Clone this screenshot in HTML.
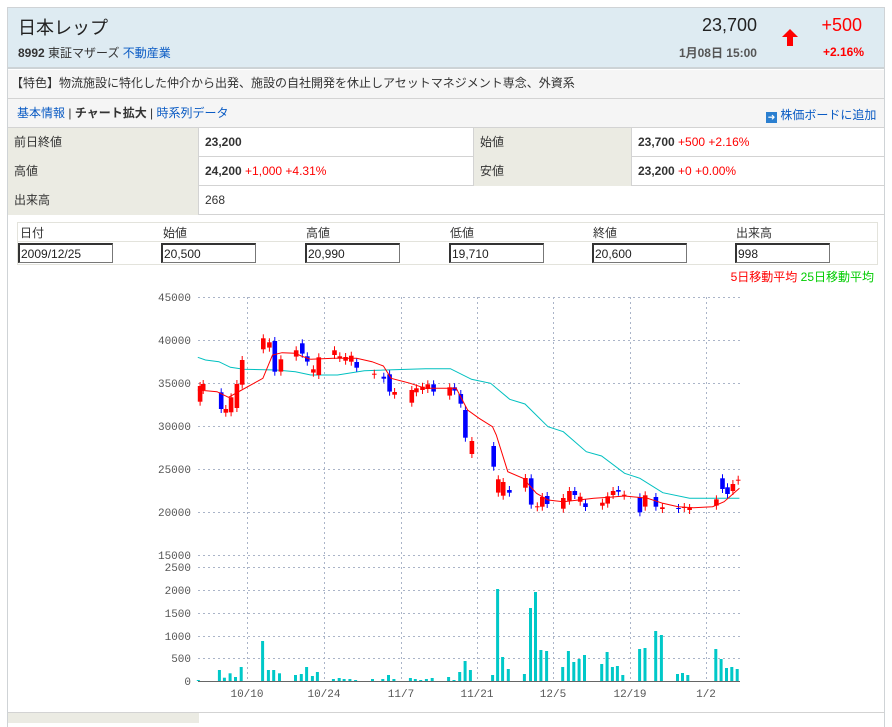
<!DOCTYPE html>
<html><head><meta charset="utf-8"><style>
*{margin:0;padding:0;box-sizing:border-box}
body{width:892px;height:720px;background:#fff;font-family:"Liberation Sans","Noto Sans CJK JP",sans-serif;font-size:12px;color:#333;position:relative;overflow:hidden}
.a{position:absolute}
.box{left:7px;top:7px;width:878px;height:720px;border:1px solid #cfd3d6;border-bottom:none}
.hdr{left:8px;top:8px;width:876px;height:61px;background:#deebf2;border-bottom:2px solid #cdd3d6}
.red{color:#f00}
.blue{color:#0a5bc4}
.row{left:8px;width:876px;border-bottom:1px solid #d3d3d3}
.lab{background:#ebebe3}
.cell{position:absolute;top:0;height:29px;line-height:29px;padding-left:6px;font-size:12px;border-right:1px solid #d3d3d3}
input{position:absolute;height:20px;width:95px;border:1px solid #777;border-top:2px solid #333;border-left:2px solid #333;font:12px "Liberation Sans","Noto Sans CJK JP",sans-serif;padding-left:1px;color:#222;background:#fff}
</style></head><body>
<div class="a box"></div>
<div class="a hdr"></div>
<div class="a" style="left:18px;top:14px;font-size:18px;color:#222">日本レップ</div>
<div class="a" style="left:18px;top:44px;font-size:12px;color:#333"><b>8992</b> 東証マザーズ <span class="blue">不動産業</span></div>
<div class="a" style="left:690px;top:15px;width:67px;text-align:right;font-size:18px;color:#222">23,700</div>
<div class="a" style="left:640px;top:44px;width:117px;text-align:right;font-size:12px;color:#555;font-weight:bold">1月08日 15:00</div>
<svg class="a" style="left:780px;top:28px" width="20" height="20"><path d="M10 1 L18 9 L13 9 L13 18 L7 18 L7 9 L2 9 Z" fill="#f00"/></svg>
<div class="a red" style="left:800px;top:15px;width:62px;text-align:right;font-size:18px">+500</div>
<div class="a red" style="left:800px;top:45px;width:64px;text-align:right;font-size:12px;font-weight:bold">+2.16%</div>

<div class="a row" style="top:70px;height:29px;background:#f5f5f5;line-height:27px;padding-left:3px;font-size:12px;color:#333">【特色】物流施設に特化した仲介から出発、施設の自社開発を休止しアセットマネジメント専念、外資系</div>
<div class="a row" style="top:99px;height:29px;background:#f5f5f5;line-height:28px;padding-left:9px;font-size:12px"><span class="blue">基本情報</span> | <b>チャート拡大</b> | <span class="blue">時系列データ</span></div>
<div class="a blue" style="left:766px;top:106px;font-size:12px"><span style="display:inline-block;width:11px;height:11px;background:#2b7fd0;color:#fff;font-size:9px;line-height:11px;text-align:center;vertical-align:-1px">➜</span> 株価ボードに追加</div>

<div class="a row" style="top:128px;height:29px">
<div class="cell lab" style="left:0;width:191px">前日終値</div><div class="cell" style="left:191px;width:275px"><b>23,200</b></div>
<div class="cell lab" style="left:466px;width:158px">始値</div><div class="cell" style="left:624px;width:252px;border:none"><b>23,700</b> <span class="red">+500 +2.16%</span></div></div>
<div class="a row" style="top:157px;height:29px">
<div class="cell lab" style="left:0;width:191px">高値</div><div class="cell" style="left:191px;width:275px"><b>24,200</b> <span class="red">+1,000 +4.31%</span></div>
<div class="cell lab" style="left:466px;width:158px">安値</div><div class="cell" style="left:624px;width:252px;border:none"><b>23,200</b> <span class="red">+0 +0.00%</span></div></div>
<div class="a row" style="top:186px;height:29px">
<div class="cell lab" style="left:0;width:191px">出来高</div><div class="cell" style="left:191px;width:685px;border:none">268</div></div>

<div class="a" style="left:17px;top:222px;width:861px;height:43px;border:1px solid #e3e3dc"></div>
<div class="a" style="left:17px;top:241px;width:861px;border-top:1px solid #e3e3dc"></div>
<div class="a" style="left:20px;top:224px;font-size:12px">日付</div>
<div class="a" style="left:163px;top:224px;font-size:12px">始値</div>
<div class="a" style="left:306px;top:224px;font-size:12px">高値</div>
<div class="a" style="left:450px;top:224px;font-size:12px">低値</div>
<div class="a" style="left:593px;top:224px;font-size:12px">終値</div>
<div class="a" style="left:736px;top:224px;font-size:12px">出来高</div>
<input style="left:18px;top:243px" value="2009/12/25">
<input style="left:161px;top:243px" value="20,500">
<input style="left:305px;top:243px" value="20,990">
<input style="left:449px;top:243px" value="19,710">
<input style="left:592px;top:243px" value="20,600">
<input style="left:735px;top:243px" value="998">
<div class="a" style="left:600px;top:268px;width:274px;text-align:right;font-size:12px"><span class="red">5日移動平均</span> <span style="color:#0c0">25日移動平均</span></div>

<svg id="ch" class="a" style="left:0;top:0" width="892" height="720" font-family="Liberation Mono, monospace" font-size="11" fill="#555">
<g stroke="#aab4c8" stroke-dasharray="2,3" stroke-width="1">
<line x1="198" x2="740" y1="297.5" y2="297.5"/><line x1="198" x2="740" y1="340.5" y2="340.5"/><line x1="198" x2="740" y1="383.5" y2="383.5"/><line x1="198" x2="740" y1="426.5" y2="426.5"/><line x1="198" x2="740" y1="469.5" y2="469.5"/><line x1="198" x2="740" y1="512.5" y2="512.5"/><line x1="198" x2="740" y1="555.5" y2="555.5"/>
<line x1="198" x2="740" y1="567.5" y2="567.5"/><line x1="198" x2="740" y1="590.5" y2="590.5"/><line x1="198" x2="740" y1="613.5" y2="613.5"/><line x1="198" x2="740" y1="636.5" y2="636.5"/><line x1="198" x2="740" y1="658.5" y2="658.5"/>
<line x1="247.5" x2="247.5" y1="297" y2="681"/><line x1="324.5" x2="324.5" y1="297" y2="681"/><line x1="401.5" x2="401.5" y1="297" y2="681"/><line x1="477.5" x2="477.5" y1="297" y2="681"/><line x1="553.5" x2="553.5" y1="297" y2="681"/><line x1="630.5" x2="630.5" y1="297" y2="681"/><line x1="706.5" x2="706.5" y1="297" y2="681"/>
</g>
<line x1="198" x2="740" y1="681.5" y2="681.5" stroke="#666"/>
<g text-anchor="end">
<text x="191" y="301">45000</text><text x="191" y="344">40000</text><text x="191" y="387">35000</text><text x="191" y="430">30000</text><text x="191" y="473">25000</text><text x="191" y="516">20000</text><text x="191" y="559">15000</text>
<text x="191" y="571">2500</text><text x="191" y="594">2000</text><text x="191" y="617">1500</text><text x="191" y="640">1000</text><text x="191" y="662">500</text><text x="191" y="685">0</text>
</g>
<g text-anchor="middle">
<text x="247" y="697">10/10</text><text x="324" y="697">10/24</text><text x="401" y="697">11/7</text><text x="477" y="697">11/21</text><text x="553" y="697">12/5</text><text x="630" y="697">12/19</text><text x="706" y="697">1/2</text>
</g>
<g id="g"></g>
</svg>
<div class="a" style="left:8px;top:712px;width:876px;border-top:1px solid #d3d3d3;height:10px"></div>
<div class="a lab" style="left:8px;top:713px;width:191px;height:10px"></div>
<script>
var X=function(z){return 150+z/2.613},Y=function(z){return 280+z/3};
var c=[[125,318,365,'r'],[133,312,330,'r'],[180,337,387,'b'],[192,387,398,'r'],[206,352,397,'r'],[221,312,384,'r'],[235,240,314,'r'],[290,175,208,'r'],[306,187,203,'r'],[320,183,275,'b'],[336,238,275,'r'],[376,211,230,'r'],[392,190,221,'b'],[405,229,245,'b'],[421,268,278,'r'],[435,232,285,'r'],[476,211,225,'r'],[490,229,234,'r'],[505,231,242,'r'],[520,227,245,'r'],[534,246,263,'b'],[580,281,284,'r'],[605,290,296,'b'],[620,283,335,'b'],[633,336,344,'r'],[678,330,368,'r'],[690,325,337,'r'],[706,320,330,'r'],[720,313,327,'r'],[735,313,335,'b'],[777,322,347,'r'],[790,322,332,'b'],[806,342,371,'b'],[818,390,473,'b'],[835,483,522,'r'],[892,498,560,'b'],[904,598,638,'r'],[917,606,647,'r'],[933,630,638,'b'],[975,594,623,'r'],[990,595,674,'b'],[1006,679,682,'r'],[1019,651,680,'r'],[1032,648,672,'b'],[1074,654,686,'r'],[1090,633,662,'r'],[1104,633,645,'b'],[1118,650,665,'r'],[1132,670,681,'b'],[1176,668,677,'r'],[1190,649,671,'r'],[1204,633,645,'r'],[1218,630,635,'b'],[1233,644,647,'r'],[1274,652,697,'b'],[1288,646,680,'r'],[1316,651,680,'b'],[1333,682,687,'r'],[1375,684,687,'b'],[1390,681,684,'r'],[1404,684,690,'r'],[1474,658,677,'r'],[1490,595,627,'b'],[1503,622,642,'b'],[1517,612,633,'r'],[1531,599,602,'r']];
var v=[[125,1200],[180,1170],[193,1193],[208,1180],[222,1191],[237,1161],[293,1083],[308,1170],[322,1170],[337,1180],[379,1185],[394,1182],[408,1161],[423,1188],[436,1176],[478,1197],[493,1194],[506,1197],[521,1197],[536,1200],[580,1197],[607,1197],[622,1185],[636,1197],[679,1194],[692,1197],[706,1200],[721,1197],[736,1194],[779,1191],[793,1200],[808,1176],[822,1143],[836,1170],[894,1185],[907,927],[920,1131],[935,1167],[977,1182],[993,984],[1006,936],[1020,1110],[1035,1113],[1077,1161],[1092,1113],[1106,1146],[1120,1137],[1134,1125],[1179,1152],[1193,1116],[1207,1161],[1220,1158],[1234,1185],[1278,1107],[1292,1104],[1320,1053],[1335,1065],[1377,1182],[1390,1179],[1404,1185],[1477,1107],[1491,1137],[1505,1164],[1519,1161],[1533,1167]];
var r5=[[125,330],[175,335],[205,352],[235,333],[295,295],[320,225],[345,218],[380,220],[395,228],[420,238],[480,235],[540,235],[580,245],[610,258],[630,295],[680,310],[720,325],[800,325],[830,390],[860,415],[895,440],[905,465],[935,575],[975,595],[1010,640],[1040,660],[1080,665],[1160,655],[1200,652],[1240,648],[1300,655],[1340,670],[1380,680],[1420,683],[1470,680],[1500,665],[1540,625]];
var r25=[[125,232],[145,240],[180,245],[210,262],[245,268],[330,270],[380,275],[420,285],[490,285],[560,272],[720,266],[785,266],[840,298],[890,310],[940,358],[980,372],[1040,440],[1080,455],[1140,515],[1180,528],[1240,580],[1280,595],[1340,638],[1410,655],[1540,655]];
var s='';
v.forEach(function(b){var x=X(b[0]),y=Y(b[1]);s+='<rect x="'+(x-1).toFixed(1)+'" y="'+y.toFixed(1)+'" width="3" height="'+(681-y).toFixed(1)+'" fill="#00c8c8"/>';});
function pl(a,col){return '<polyline fill="none" stroke="'+col+'" stroke-width="1" points="'+a.map(function(p){return X(p[0]).toFixed(1)+','+Y(p[1]).toFixed(1)}).join(' ')+'"/>';}
s+=pl(r25,'#00c0c0');
c.forEach(function(k){var x=X(k[0]),t=Y(k[1]),b=Y(k[2]),col=k[3]=='r'?'#f00':'#00f';var h=Math.max(b-t,1);s+='<line x1="'+(x+2.3).toFixed(1)+'" x2="'+(x+2.3).toFixed(1)+'" y1="'+(t-4).toFixed(1)+'" y2="'+(b+4).toFixed(1)+'" stroke="'+col+'"/>';s+='<rect x="'+x.toFixed(1)+'" y="'+t.toFixed(1)+'" width="4.6" height="'+h.toFixed(1)+'" fill="'+col+'"/>';});
s+=pl(r5,'#f00');
document.getElementById('g').innerHTML=s;
</script>
</body></html>
